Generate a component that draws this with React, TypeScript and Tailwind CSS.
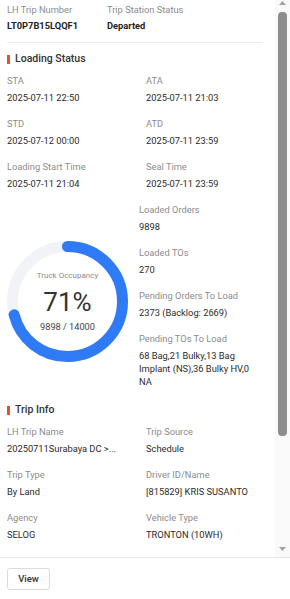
import React from "react";

type FieldProps = { label: string; value: React.ReactNode };

function Field({ label, value }: FieldProps) {
  return (
    <div className="flex flex-col min-w-0">
      <span className="text-[9.3px] leading-[14px] text-[#8c8c8c]">{label}</span>
      <span className="mt-[3px] text-[9.3px] leading-[13px] text-[#2b2b2b]">{value}</span>
    </div>
  );
}

function SectionTitle({ children }: React.PropsWithChildren) {
  return (
    <div className="flex items-center gap-[5px] h-4">
      <span className="w-[3px] h-[9px] bg-[#ee4d2d]" />
      <span className="text-[10.5px] font-medium text-[#333333] leading-4">{children}</span>
    </div>
  );
}

function Occupancy({ pct, loaded, total }: { pct: number; loaded: number; total: number }) {
  const r = 55;
  const c = 2 * Math.PI * r;
  return (
    <div className="relative size-[121px]">
      <svg className="absolute inset-0" width="121" height="121" viewBox="0 0 121 121">
        <circle cx="60.5" cy="60.5" r={r} fill="none" stroke="#f2f3f7" strokeWidth="11" />
        <circle
          cx="60.5"
          cy="60.5"
          r={r}
          fill="none"
          stroke="#2f7bf5"
          strokeWidth="11"
          strokeLinecap="round"
          strokeDasharray={`${(c * pct) / 100} ${c}`}
          transform="rotate(-90 60.5 60.5)"
        />
      </svg>
      <div className="relative flex flex-col items-center pt-[29px]">
        <span className="text-[8px] leading-[12px] text-[#8c8c8c]">Truck Occupancy</span>
        <span className="text-[26px] leading-[32px] mt-[4px] text-[#333333]">{pct}%</span>
        <span className="text-[9.2px] leading-[12px] mt-[3px] text-[#444444]">
          {loaded} / {total}
        </span>
      </div>
    </div>
  );
}

function Arrow({ down }: { down?: boolean }) {
  return (
    <svg width="7" height="4" viewBox="0 0 7 4" className={down ? "rotate-180" : ""}>
      <path d="M3.5 0 L7 4 L0 4 Z" fill="#a3a3a3" />
    </svg>
  );
}

export default function App() {
  return (
    <div className="w-[290px] h-[599px] flex flex-col bg-white font-['Roboto',sans-serif]">
      <div className="h-[557px] flex">
        <div className="flex-1 overflow-hidden">
          <div className="pl-[7px] pr-[12px] pt-[3px] pb-[14px]">
            <div className="grid grid-cols-[100px_1fr] pb-[9px] border-b border-[#ebebeb]">
              <div className="flex flex-col">
                <span className="text-[9.3px] leading-[14px] text-[#8c8c8c]">LH Trip Number</span>
                <span className="mt-[2px] text-[9.3px] leading-[14px] font-bold text-[#222222]">LT0P7B15LQQF1</span>
              </div>
              <div className="flex flex-col">
                <span className="text-[9.3px] leading-[14px] text-[#8c8c8c]">Trip Station Status</span>
                <span className="mt-[2px] text-[9.3px] leading-[14px] font-bold text-[#222222]">Departed</span>
              </div>
            </div>

            <div className="mt-[8px]">
              <SectionTitle>Loading Status</SectionTitle>
            </div>
            <div className="mt-[7px] grid grid-cols-[139px_1fr] gap-y-[13px]">
              <Field label="STA" value="2025-07-11 22:50" />
              <Field label="ATA" value="2025-07-11 21:03" />
              <Field label="STD" value="2025-07-12 00:00" />
              <Field label="ATD" value="2025-07-11 23:59" />
              <Field label="Loading Start Time" value="2025-07-11 21:04" />
              <Field label="Seal Time" value="2025-07-11 23:59" />
            </div>
            <div className="mt-[13px] flex">
              <div className="w-[132px] pt-[38px]">
                <Occupancy pct={71} loaded={9898} total={14000} />
              </div>
              <div className="w-[118px] flex flex-col gap-[13px]">
                <Field label="Loaded Orders" value="9898" />
                <Field label="Loaded TOs" value="270" />
                <Field label="Pending Orders To Load" value="2373 (Backlog: 2669)" />
                <Field label="Pending TOs To Load" value="68 Bag,21 Bulky,13 Bag Implant (NS),36 Bulky HV,0 NA" />
              </div>
            </div>

            <div className="mt-[14px]">
              <SectionTitle>Trip Info</SectionTitle>
            </div>
            <div className="mt-[7px] grid grid-cols-[139px_1fr] gap-y-[13px]">
              <Field label="LH Trip Name" value="20250711Surabaya DC >..." />
              <Field label="Trip Source" value="Schedule" />
              <Field label="Trip Type" value="By Land" />
              <Field label="Driver ID/Name" value="[815829] KRIS SUSANTO" />
              <Field label="Agency" value="SELOG" />
              <Field label="Vehicle Type" value="TRONTON (10WH)" />
              <Field label="Vehicle Plate Number" value="L 9087 UO" />
              <Field label="Car Type" value="Truck" />
            </div>
          </div>
        </div>
        <div className="w-[15px] flex flex-col items-center bg-[#f9f9f9]">
          <div className="h-[12px] pt-[1px]">
            <Arrow />
          </div>
          <div className="w-[9px] h-[424px] rounded-[4px] bg-[#8d8d8d]" />
          <div className="flex-1" />
          <div className="h-[12px] pb-[6px] flex items-end">
            <Arrow down />
          </div>
        </div>
      </div>
      <div className="flex-1 border-t border-[#e8e8ec] px-[7px] pt-[10px]">
        <button className="w-[43px] h-[22px] flex items-center justify-center rounded-[3px] border border-[#dcdcdc] bg-white text-[9.5px] leading-[12px] font-medium text-[#333333]">
          View
        </button>
      </div>
    </div>
  );
}
